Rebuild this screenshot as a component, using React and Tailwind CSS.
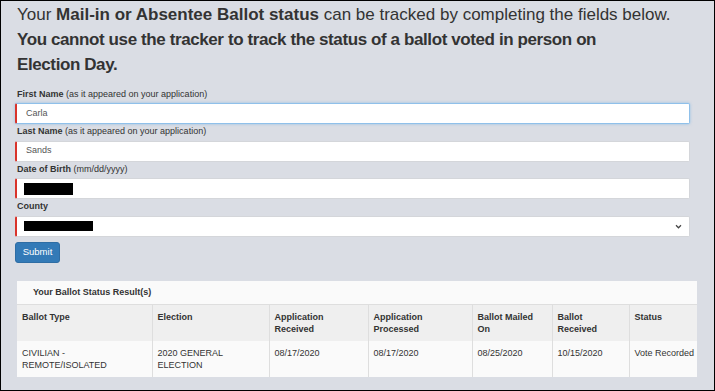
const columns = [
  { label: 'Ballot Type', w: 'w-[135px]' },
  { label: 'Election', w: 'w-[117px]' },
  { label: 'Application Received', w: 'w-[99px]' },
  { label: 'Application Processed', w: 'w-[104px]' },
  { label: 'Ballot Mailed On', w: 'w-[80px]' },
  { label: 'Ballot Received', w: 'w-[77px]' },
  { label: 'Status', w: 'w-[68px]' },
];

const row = [
  'CIVILIAN - REMOTE/ISOLATED',
  '2020 GENERAL ELECTION',
  '08/17/2020',
  '08/17/2020',
  '08/25/2020',
  '10/15/2020',
  'Vote Recorded',
];

const Field = ({ label, hint, children, focused }) => (
  <div>
    <div className="leading-[14px] text-[9px] mb-[2.5px] ml-[2px]">
      <span className="font-bold">{label}</span> {hint}
    </div>
    <div
      className={
        'h-[21px] bg-white rounded-[2px] border-l-2 border-l-[#d9342b] flex items-center pl-[9px] pr-[6px] text-[9px] text-[#555] ' +
        (focused
          ? 'border-y border-r border-y-[#8fc0ea] border-r-[#8fc0ea] shadow-[0_0_3px_rgba(102,175,233,0.6)]'
          : 'border-y border-r border-y-[#d4d6da] border-r-[#d4d6da]')
      }
    >
      {children}
    </div>
  </div>
);

export default function App() {
  return (
    <div
      className="w-[715px] h-[391px] border border-black bg-[#dadde4] text-[#333] overflow-hidden"
      style={{ fontFamily: '"Liberation Sans", Arial, sans-serif' }}
    >
      <div className="pl-[16px] pt-[1px] text-[17px] leading-[25px]">
        <p>
          Your <b>Mail-in or Absentee Ballot status</b> can be tracked by completing the fields below.
        </p>
        <p className="font-bold tracking-[-0.4px]">
          You cannot use the tracker to track the status of a ballot voted in person on<br />
          Election Day.
        </p>
      </div>

      <div className="pl-[14px] pr-[24px] mt-[9.5px]">
        <Field label="First Name" hint="(as it appeared on your application)" focused>
          Carla
        </Field>
        <Field label="Last Name" hint="(as it appeared on your application)">
          Sands
        </Field>
        <Field label="Date of Birth" hint="(mm/dd/yyyy)">
          <div className="w-[49px] h-[12px] bg-black -ml-[2px]" />
        </Field>
        <Field label="County">
          <div className="w-[69px] h-[10px] bg-black -ml-[2px]" />
          <div className="flex-1" />
          <svg width="7" height="5" viewBox="0 0 8 6" className="mr-[1px]">
            <path d="M1 1.5 L4 4.5 L7 1.5" fill="none" stroke="#444" strokeWidth="1.5" />
          </svg>
        </Field>

        <button className="mt-[5.5px] h-[21px] w-[45px] bg-[#337ab7] border border-[#2e6da4] rounded-[3px] text-white text-[9.5px]">
          Submit
        </button>
      </div>

      <div className="ml-[16px] mt-[18px] w-[680px] bg-[#fafafa] text-[9px]">
        <div className="h-[23px] flex items-center pl-[16px] font-bold">Your Ballot Status Result(s)</div>
        <table className="w-[680px] table-fixed border-collapse">
          <thead>
            <tr className="bg-[#efefef]">
              {columns.map((c) => (
                <th
                  key={c.label}
                  className={c.w + ' text-left align-top font-bold leading-[12px] px-[5px] pt-[6px] pb-[6px] h-[36px] border-l border-[#dedede] first:border-l-0 border-t'}
                >
                  {c.label}
                </th>
              ))}
            </tr>
          </thead>
          <tbody>
            <tr className="bg-[#fafafa]">
              {row.map((v, i) => (
                <td
                  key={i}
                  className={
                    'align-top leading-[12px] pl-[5px] pr-[3px] pt-[6px] pb-[6px] h-[36px] border-l border-[#dedede] first:border-l-0 ' +
                    (i === row.length - 1 ? 'whitespace-nowrap' : '')
                  }
                >
                  {v}
                </td>
              ))}
            </tr>
          </tbody>
        </table>
      </div>
    </div>
  );
}
